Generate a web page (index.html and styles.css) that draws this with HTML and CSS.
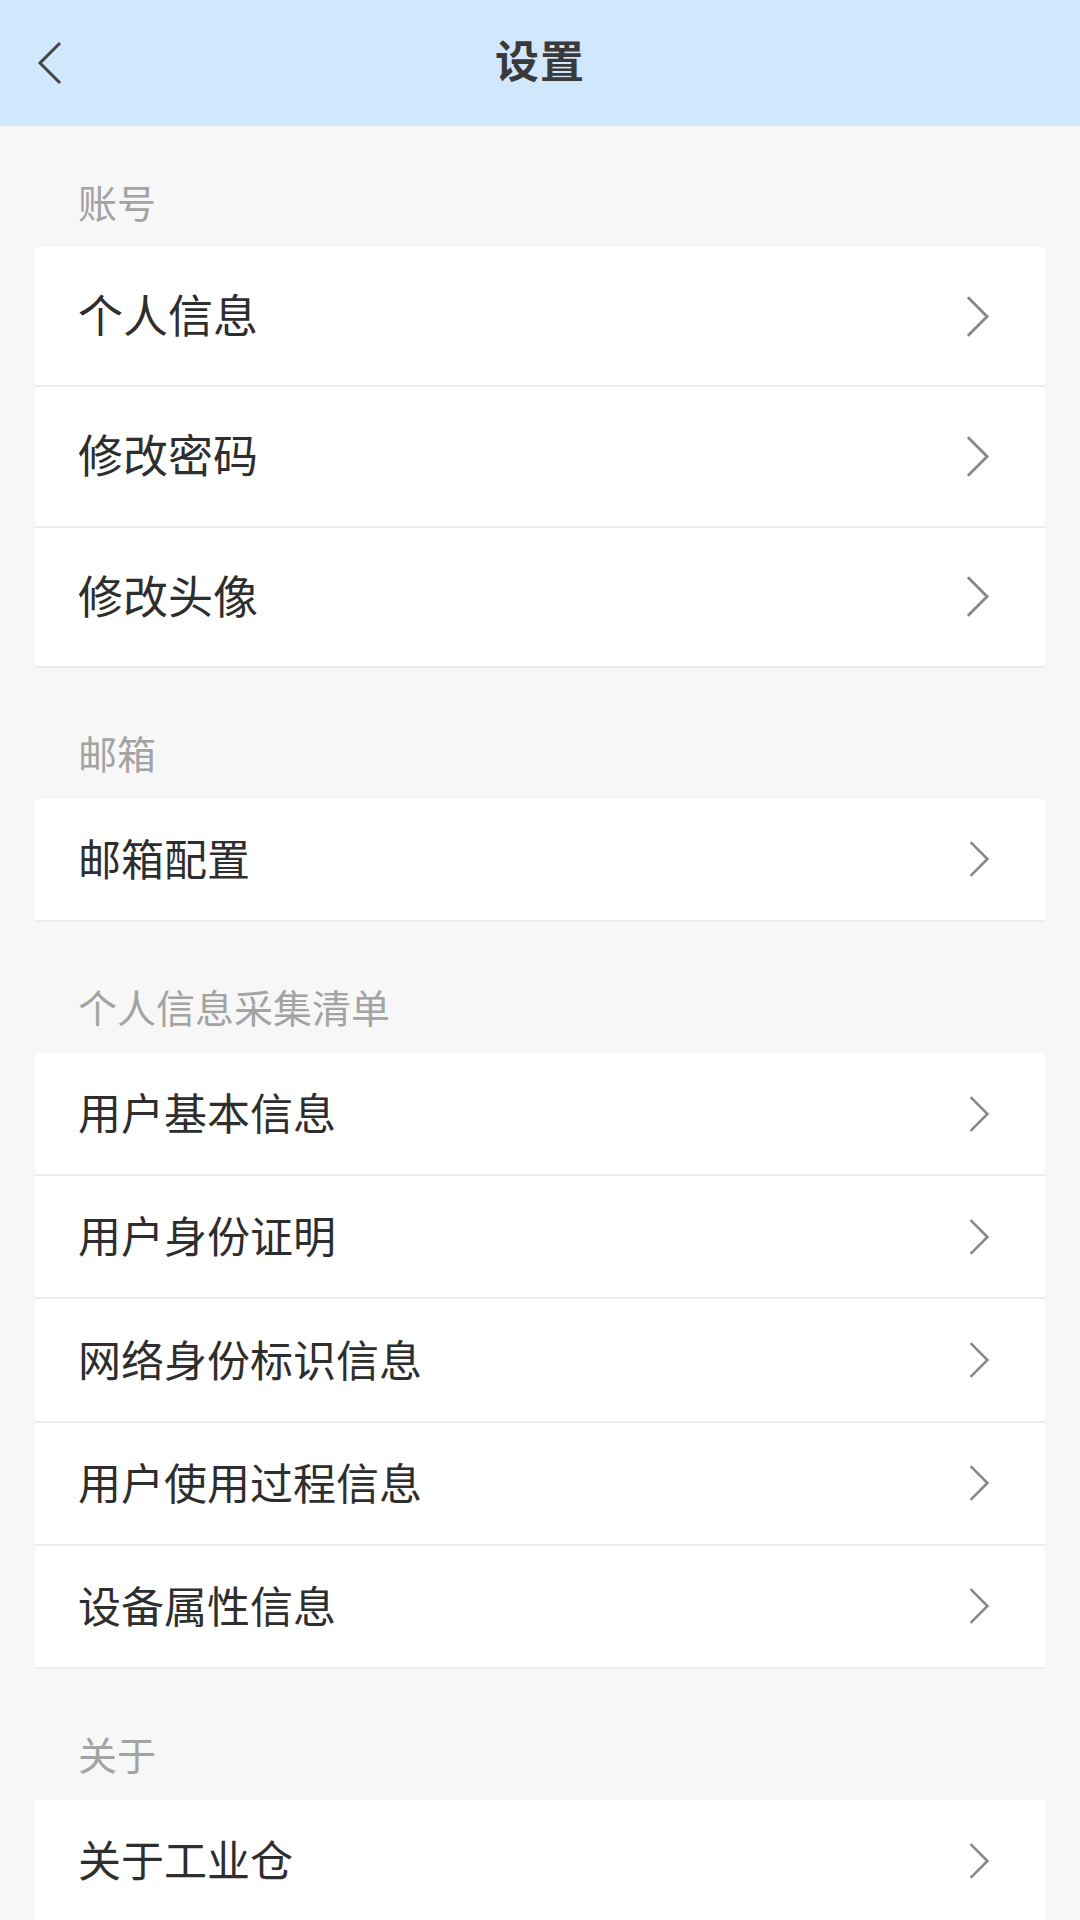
FILE: index.html
```html
<!DOCTYPE html>
<html lang="zh-CN">
<head>
<meta charset="utf-8">
<title>设置</title>
<link rel="stylesheet" href="styles.css">
</head>
<body>
<header class="topbar">
  <span class="back">
    <svg width="28" height="44" viewBox="0 0 28 44"><polyline points="24,2 4,22 24,42" fill="none" stroke="#444" stroke-width="3"/></svg>
  </span>
  <h1 class="title">设置</h1>
</header>
<main class="page">
  <div class="section-title first">账号</div>
  <ul class="card big">
    <li class="row"><span class="label">个人信息</span><i class="chev"><svg viewBox="0 0 26 44"><polyline points="3,2 23,22 3,42" fill="none" stroke="#888" stroke-width="3"/></svg></i></li>
    <li class="row"><span class="label">修改密码</span><i class="chev"><svg viewBox="0 0 26 44"><polyline points="3,2 23,22 3,42" fill="none" stroke="#888" stroke-width="3"/></svg></i></li>
    <li class="row"><span class="label">修改头像</span><i class="chev"><svg viewBox="0 0 26 44"><polyline points="3,2 23,22 3,42" fill="none" stroke="#888" stroke-width="3"/></svg></i></li>
  </ul>
  <div class="section-title">邮箱</div>
  <ul class="card">
    <li class="row"><span class="label">邮箱配置</span><i class="chev"><svg viewBox="0 0 26 44"><polyline points="3,2 23,22 3,42" fill="none" stroke="#888" stroke-width="3"/></svg></i></li>
  </ul>
  <div class="section-title">个人信息采集清单</div>
  <ul class="card">
    <li class="row"><span class="label">用户基本信息</span><i class="chev"><svg viewBox="0 0 26 44"><polyline points="3,2 23,22 3,42" fill="none" stroke="#888" stroke-width="3"/></svg></i></li>
    <li class="row"><span class="label">用户身份证明</span><i class="chev"><svg viewBox="0 0 26 44"><polyline points="3,2 23,22 3,42" fill="none" stroke="#888" stroke-width="3"/></svg></i></li>
    <li class="row"><span class="label">网络身份标识信息</span><i class="chev"><svg viewBox="0 0 26 44"><polyline points="3,2 23,22 3,42" fill="none" stroke="#888" stroke-width="3"/></svg></i></li>
    <li class="row"><span class="label">用户使用过程信息</span><i class="chev"><svg viewBox="0 0 26 44"><polyline points="3,2 23,22 3,42" fill="none" stroke="#888" stroke-width="3"/></svg></i></li>
    <li class="row"><span class="label">设备属性信息</span><i class="chev"><svg viewBox="0 0 26 44"><polyline points="3,2 23,22 3,42" fill="none" stroke="#888" stroke-width="3"/></svg></i></li>
  </ul>
  <div class="section-title">关于</div>
  <ul class="card">
    <li class="row"><span class="label">关于工业仓</span><i class="chev"><svg viewBox="0 0 26 44"><polyline points="3,2 23,22 3,42" fill="none" stroke="#888" stroke-width="3"/></svg></i></li>
  </ul>
</main>
</body>
</html>
```
FILE: styles.css
```css
* { box-sizing: border-box; }
html, body {
  margin: 0;
  padding: 0;
  background: #f7f7f7;
  font-family: "Noto Sans CJK SC", "Noto Sans", sans-serif;
  color: #333;
}
body { height: 1920px; overflow: hidden; }
.topbar {
  height: 126px;
  background: #d1e7fe;
  display: flex;
  align-items: center;
  justify-content: center;
  position: relative;
}
.back {
  position: absolute;
  left: 36px;
  top: 41px;
  width: 28px;
  height: 44px;
  display: block;
}
.back svg { display: block; }
.title {
  margin: -8px 0 0;
  font-size: 44px;
  font-weight: 700;
  color: #3a3a3a;
  line-height: 1;
  letter-spacing: 1px;
}
.page { padding: 0 35px; }
.section-title {
  font-size: 39px;
  line-height: 40px;
  color: #a3a3a3;
  padding: 64px 0 27px 43px;
}
.section-title.first { padding: 55px 0 26px 43px; }
.card {
  list-style: none;
  margin: 0;
  padding: 0;
  background: #fff;
}
.row {
  height: 123.2px;
  border-bottom: 2px solid #ececec;
  display: flex;
  align-items: center;
  justify-content: space-between;
  padding: 0 55px 0 43px;
  font-size: 43px;
  color: #2e2e2e;
}
.label { padding-bottom: 5px; }
.card.big .row {
  height: 140.3px;
  font-size: 45px;
}
.chev {
  display: block;
  width: 22px;
  height: 38px;
}
.card.big .chev { width: 25px; height: 43px; }
.chev svg { display: block; width: 100%; height: 100%; }
```
